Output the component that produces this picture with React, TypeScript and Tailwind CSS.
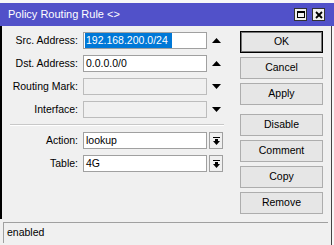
import React from 'react';

const font = { fontFamily: '"Liberation Sans", Arial, sans-serif' };

const UpArrow = () => (
  <svg width="9" height="5" viewBox="0 0 9 5">
    <polygon points="0,5 9,5 4.5,0" fill="#000" />
  </svg>
);

const DownArrow = () => (
  <svg width="9" height="5" viewBox="0 0 9 5">
    <polygon points="0,0 9,0 4.5,5" fill="#000" />
  </svg>
);

const DropIcon = () => (
  <svg width="7" height="8" viewBox="0 0 7 8">
    <rect x="0" y="0" width="7" height="1" fill="#000" />
    <rect x="2" y="2" width="3" height="2" fill="#000" />
    <polygon points="0,4 7,4 3.5,8" fill="#000" />
  </svg>
);

const fields = [
  { label: 'Src. Address:', value: '192.168.200.0/24', selected: true, disabled: false, arrow: 'up' },
  { label: 'Dst. Address:', value: '0.0.0.0/0', selected: false, disabled: false, arrow: 'up' },
  { label: 'Routing Mark:', value: '', selected: false, disabled: true, arrow: 'down' },
  { label: 'Interface:', value: '', selected: false, disabled: true, arrow: 'down' },
];

const combos = [
  { label: 'Action:', value: 'lookup' },
  { label: 'Table:', value: '4G' },
];

const buttons = ['OK', 'Cancel', 'Apply', 'Disable', 'Comment', 'Copy', 'Remove'];

const App: React.FC = () => {
  return (
    <div className="w-[334px] h-[245px] bg-[#f7f7f7] pt-[3px] text-[10.5px] text-black overflow-hidden" style={font}>
      {/* Title bar */}
      <div className="h-[23px] bg-[#5151c9] flex items-center justify-between pl-[8px] pr-[9px]">
        <span className="text-white text-[11px]">Policy Routing Rule &lt;&gt;</span>
        <div className="flex gap-[5px]">
          <div className="w-[13px] h-[13px] bg-[#f0f0f0] border border-[#333] flex items-center justify-center">
            <div className="w-[8px] h-[7px] border border-black border-t-2" />
          </div>
          <div className="w-[13px] h-[13px] bg-[#f0f0f0] border border-[#333] flex items-center justify-center">
            <svg width="8" height="8" viewBox="0 0 8 8">
              <path d="M1 1 L7 7 M7 1 L1 7" stroke="#000" strokeWidth="1.8" />
            </svg>
          </div>
        </div>
      </div>

      {/* Body */}
      <div className="w-[332px] h-[219px] bg-[#f0f0f0] border-r border-[#444] flex flex-col">
        <div className="flex h-[193px] border-l-2 border-black">
          {/* Form */}
          <div className="w-[223px] pt-[6px] flex flex-col">
            <div className="flex flex-col gap-[6px]">
              {fields.map((f) => (
                <div key={f.label} className="flex items-center h-[17px]">
                  <div className="w-[76px] text-right">{f.label}</div>
                  <div
                    className={`ml-[5px] w-[124px] h-[17px] border flex items-center pl-[1px] ${
                      f.disabled ? 'bg-[#f0f0f0] border-[#bcbcbc]' : 'bg-white border-[#a0a0a0]'
                    }`}
                  >
                    {f.selected ? (
                      <span className="bg-[#0078d7] text-white h-[15px] leading-[15px] pl-[1px] pr-[4px]">{f.value}</span>
                    ) : (
                      <span className="pl-[1px]">{f.value}</span>
                    )}
                  </div>
                  <div className="w-[18px] flex justify-center">
                    {f.arrow === 'up' ? <UpArrow /> : <DownArrow />}
                  </div>
                </div>
              ))}
            </div>

            <div className="ml-[8px] mt-[6px] w-[214px] h-[2px] border-t border-[#c8c8c8] border-b border-b-white" />

            <div className="mt-[6px] flex flex-col gap-[6px]">
              {combos.map((c) => (
                <div key={c.label} className="flex items-center h-[17px]">
                  <div className="w-[76px] text-right">{c.label}</div>
                  <div className="ml-[5px] w-[124px] h-[17px] bg-white border border-[#a0a0a0] flex items-center pl-[2px]">
                    {c.value}
                  </div>
                  <div className="ml-[2px] w-[14px] h-[17px] border border-[#a0a0a0] bg-[#f0f0f0] flex items-center justify-center">
                    <DropIcon />
                  </div>
                </div>
              ))}
            </div>
          </div>

          {/* Buttons */}
          <div className="ml-[15px] pt-[5px] flex flex-col">
            {buttons.map((b, i) => (
              <div
                key={b}
                className={`w-[83px] h-[22px] flex items-center justify-center bg-[#e6e6e6] border ${
                  i === 0 ? 'border-black shadow-[inset_0_0_0_1px_#777]' : 'border-[#adadad]'
                } ${i === 0 ? '' : i === 3 ? 'mt-[9px]' : 'mt-[4px]'}`}
              >
                {b}
              </div>
            ))}
          </div>
        </div>

        {/* Status bar */}
        <div className="mt-[3px] ml-[3px] w-[325px] h-[21px] border-t border-l border-[#a0a0a0] flex items-center pl-[3px]">
          enabled
        </div>
      </div>
    </div>
  );
};

export default App;
